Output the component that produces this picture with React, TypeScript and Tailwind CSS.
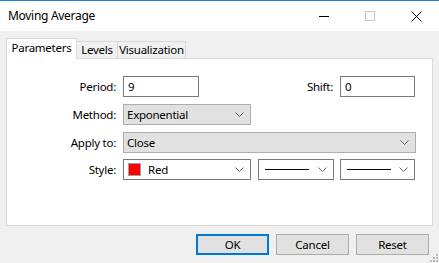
import React from "react";

const Chevron = () => (
  <svg width="9" height="5" viewBox="0 0 9 5" className="shrink-0">
    <path d="M0.5 0.5 L4.5 4.5 L8.5 0.5" fill="none" stroke="#606060" strokeWidth="1" />
  </svg>
);

const Combo = ({
  w,
  gray,
  children,
  className = "",
}: {
  w: string;
  gray?: boolean;
  children: React.ReactNode;
  className?: string;
}) => (
  <div
    className={`${w} h-[21px] flex items-center pl-[3px] pr-[6px] border ${
      gray ? "bg-[#e1e1e1] border-[#adadad]" : "bg-white border-[#7a7a7a]"
    } ${className}`}
  >
    <div className="flex-1 flex items-center min-w-0">{children}</div>
    <Chevron />
  </div>
);

const Label = ({ children, w = "w-[109px]" }: { children: React.ReactNode; w?: string }) => (
  <div className={`${w} text-right shrink-0`}>{children}</div>
);

export default function App() {
  return (
    <div
      className="w-[439px] h-[263px] bg-[#f0f0f0] border-t border-[#1883d7] flex flex-col relative text-[11.5px] tracking-[-0.25px] text-black overflow-hidden"
      style={{ fontFamily: '"Noto Sans", sans-serif' }}
    >
      {/* Title bar */}
      <div className="h-[30px] bg-white flex items-center shrink-0">
        <div className="pl-[8px] flex-1 text-[12px] tracking-[-0.3px]">Moving Average</div>
        <div className="flex items-center h-full">
          <div className="w-[46px] h-full flex items-center justify-center">
            <div className="w-[10px] h-px bg-black" />
          </div>
          <div className="w-[46px] h-full flex items-center justify-center">
            <div className="w-[10px] h-[10px] border border-[#c6c6c6]" />
          </div>
          <div className="w-[46px] h-full flex items-center justify-center">
            <svg width="11" height="11" viewBox="0 0 11 11">
              <path d="M0.5 0.5 L10.5 10.5 M10.5 0.5 L0.5 10.5" stroke="#000" strokeWidth="1" />
            </svg>
          </div>
        </div>
      </div>

      {/* Tabs */}
      <div className="mt-[7px] h-[20px] flex items-end pl-[6px] shrink-0">
        <div className="relative z-10 -mb-px h-[21px] w-[71px] bg-white border border-b-0 border-[#d9d9d9] flex items-center justify-center pb-[2px]">
          Parameters
        </div>
        <div className="h-[17px] w-[41px] border border-l-0 border-b-0 border-[#d9d9d9] flex items-center justify-center">
          Levels
        </div>
        <div className="h-[17px] w-[68px] border border-l-0 border-b-0 border-[#d9d9d9] flex items-center justify-center">
          Visualization
        </div>
      </div>

      {/* Panel */}
      <div className="ml-[6px] w-[427px] h-[168px] bg-white border border-[#d9d9d9] pt-[17px] flex flex-col shrink-0">
        <div className="flex items-center h-[21px]">
          <Label>Period:</Label>
          <div className="ml-[7px] w-[76px] h-[21px] border border-[#7a7a7a] flex items-center pl-[4px]">9</div>
          <Label w="w-[134px]">Shift:</Label>
          <div className="ml-[7px] w-[75px] h-[21px] border border-[#7a7a7a] flex items-center pl-[4px]">0</div>
        </div>
        <div className="flex items-center mt-[7px]">
          <Label>Method:</Label>
          <Combo w="w-[128px]" gray className="ml-[7px]">Exponential</Combo>
        </div>
        <div className="flex items-center mt-[7px]">
          <Label>Apply to:</Label>
          <Combo w="w-[293px]" gray className="ml-[7px]">Close</Combo>
        </div>
        <div className="flex items-center mt-[6px]">
          <Label>Style:</Label>
          <Combo w="w-[128px]" className="ml-[7px]">
            <div className="w-[13px] h-[13px] bg-[#ff0000] border border-[#a0a0a0] ml-px" />
            <span className="ml-[7px]">Red</span>
          </Combo>
          <Combo w="w-[76px]" className="ml-[7px]">
            <div className="ml-[3px] w-[44px] h-px bg-black" />
          </Combo>
          <Combo w="w-[75px]" className="ml-[6px]">
            <div className="ml-[3px] w-[44px] h-px bg-black" />
          </Combo>
        </div>
      </div>

      {/* Buttons */}
      <div className="mt-[8px] flex justify-end gap-[7px] pr-[10px] shrink-0">
        <button className="w-[73px] h-[21px] bg-[#e1e1e1] border-2 border-[#0078d7] flex items-center justify-center">
          OK
        </button>
        <button className="w-[73px] h-[21px] bg-[#e1e1e1] border border-[#adadad] flex items-center justify-center">
          Cancel
        </button>
        <button className="w-[73px] h-[21px] bg-[#e1e1e1] border border-[#adadad] flex items-center justify-center">
          Reset
        </button>
      </div>

      {/* Resize grip */}
      <svg className="absolute right-[1px] bottom-[1px]" width="8" height="8" viewBox="0 0 8 8">
        <rect x="6" y="0" width="2" height="2" fill="#bcbcbc" />
        <rect x="3" y="3" width="2" height="2" fill="#bcbcbc" />
        <rect x="6" y="3" width="2" height="2" fill="#bcbcbc" />
        <rect x="0" y="6" width="2" height="2" fill="#bcbcbc" />
        <rect x="3" y="6" width="2" height="2" fill="#bcbcbc" />
        <rect x="6" y="6" width="2" height="2" fill="#bcbcbc" />
      </svg>
    </div>
  );
}
